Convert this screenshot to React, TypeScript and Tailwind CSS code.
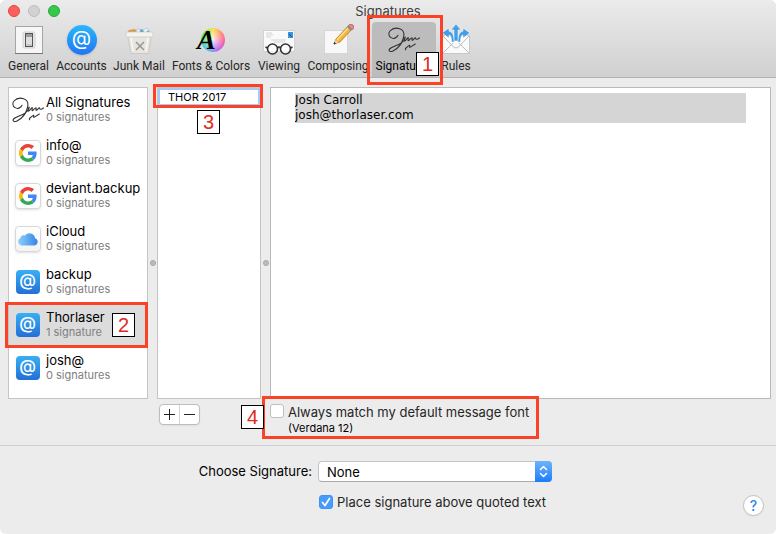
import { useState, type ReactNode } from "react";

const sans = "font-['Inter','Liberation_Sans',sans-serif]";

function SignatureGlyph({ className }: { className?: string }) {
  return (
    <svg viewBox="0 0 96 76" className={className} fill="none" stroke="#333" strokeWidth="3.200" strokeLinecap="round" strokeLinejoin="round" aria-hidden="true">
      <path d="M30 24C26 32 17 36 9 31C1 26 1 17 6 11C13 3 25 1 35 4C46 8 50 19 46 32C42 48 29 64 15 71C7 75 1 71 4 66C10 58 28 56 40 47C46 42 51 36 52 30C52 28 48 33 48 41C50 44 55 35 60 31C63 30 58 40 61 40C65 39 68 31 72 31C74 32 70 39 73 39C77 38 79 31 82 31C84 32 82 36 85 36C89 36 90 34 95 32" />
      <path d="M53 67C49 65 58 58 64 54C68 53 62 60 66 60L82 50" />
    </svg>
  );
}

function GeneralIcon() {
  return (
    <svg viewBox="0 0 32 32" className="size-8" aria-hidden="true">
      <rect x="2.500" y="2.500" width="27" height="27" fill="#f6f6f6" stroke="#a5a5a5" />
      <path d="M2 29.500h28" stroke="#777" />
      <rect x="10" y="8" width="12" height="16" rx="1.500" fill="#e7e7e7" stroke="#d2d2d2" />
      <rect x="12.500" y="9.500" width="7" height="13" fill="#c7c7c7" stroke="#555" />
      <path d="M13 10h6v3h-6z" fill="#9b9b9b" />
      <path d="M13 13h6v7h-6z" fill="#dedede" />
    </svg>
  );
}

function AccountsIcon() {
  return (
    <span className="flex size-[30px] items-center justify-center rounded-full bg-linear-to-b from-[#2cb8f8] to-[#2472f5] pb-1 text-[20px] leading-none text-white shadow-sm" aria-hidden="true">
      @
    </span>
  );
}

function JunkIcon() {
  return (
    <svg viewBox="0 0 32 32" className="size-8" aria-hidden="true">
      <path d="M4 9l2-3 6-1 3 4z" fill="#dc9848" />
      <path d="M13 9l1-4 6 1 4-2 4 5z" fill="#e9f2f8" stroke="#a3bccd" strokeWidth=".6" />
      <path d="M16 9l2-4 3 2-1 2zM23 9l2-3 2 3z" fill="#5a9cc9" />
      <path d="M4.500 11h24l-3 18.500H8z" fill="#e7e5e0" stroke="#c2c0bb" strokeWidth=".7" />
      <path d="M8 13l2 14M25 13l-2 14" stroke="#f8f8f6" strokeWidth="1.500" />
      <rect x="3" y="8" width="27" height="5" rx="1.500" fill="#f5f3ed" stroke="#c6c4bd" strokeWidth=".7" />
      <path d="M13 18l8 8M21 18l-8 8" stroke="#9a968e" strokeWidth="1.500" />
    </svg>
  );
}

function FontsIcon() {
  return (
    <span className="relative flex size-8 items-center justify-center" aria-hidden="true">
      <span className="ml-1 size-6 rounded-full bg-[radial-gradient(circle,#ffffffcc_0%,#ffffff00_65%),conic-gradient(#f9e34d,#ff8b79,#f35fa8,#b86cf0,#5dbcf5,#50e0a0,#7ee848,#f9e34d)]" />
      <span className="absolute left-0.5 top-0.5 font-['Liberation_Serif',serif] text-[28px] font-bold italic leading-7 text-black">A</span>
    </span>
  );
}

function ViewingIcon() {
  return (
    <svg viewBox="0 0 32 32" className="size-8" aria-hidden="true">
      <rect x=".5" y="6.500" width="31" height="21" fill="#fafafa" stroke="#d2d2d2" />
      <path d="M3 9h6M3 11h7M3 13h5M8 16h15M11 18h11" stroke="#c5cacf" strokeWidth=".8" />
      <rect x="25" y="8" width="5" height="6" fill="#3c95dc" />
      <path d="M26 10l3 3" stroke="#184d83" />
      <g fill="#ffffffaa" stroke="#333" strokeWidth="1.600">
        <circle cx="9.500" cy="25" r="5" />
        <circle cx="22.500" cy="25" r="5" />
        <path d="M14.500 24q1.500-2 3 0M4.500 24l-2-1M27.500 24l2-1" fill="none" />
      </g>
    </svg>
  );
}

function ComposingIcon() {
  return (
    <svg viewBox="0 0 32 32" className="size-8" aria-hidden="true">
      <path d="M2.500 6.500h23v23h-23z" fill="#f8f8f8" stroke="#d5d5d5" />
      <path d="M12 20l2-5L27 1l4 3-13 14z" fill="#f4b63a" stroke="#a56a1c" strokeWidth=".7" />
      <path d="M15 16L28 2" stroke="#ffe18a" strokeWidth="1.400" />
      <path d="M26 2l2-2q4 0 4 4l-2 2z" fill="#e78989" stroke="#a94a54" strokeWidth=".6" />
      <path d="M25 3l4 4 1-2-3-3z" fill="#888" />
      <path d="M12 20l1.500-4 3 2.500z" fill="#ecd0a0" />
      <path d="M12 20l.5-1.500 1 1z" stroke="#333" />
    </svg>
  );
}

function RulesIcon() {
  return (
    <svg viewBox="0 0 32 32" className="size-8" aria-hidden="true">
      <path d="M2.500 11.500h27v18h-27z" fill="#fafafa" stroke="#c8c8c8" />
      <path d="M3 29l10-10M29 29L19 19M3 12l10.500 11q2.500 2 5 0L29 12" fill="none" stroke="#bdbdbd" />
      <g fill="#459de5" stroke="#fafafa" strokeWidth=".6" strokeLinejoin="round">
        <path d="M2 9l7-5v3q5 1 5.500 11h-3q0-7-2.500-7v3z" />
        <path d="M30 9l-7-5v3q-5 1-5.500 11h3q0-7 2.500-7v3z" />
        <path d="M16 0l5 6h-3v11h-4V6h-3z" />
      </g>
    </svg>
  );
}

function GoogleIcon() {
  return (
    <span className="flex size-[26px] items-center justify-center rounded border border-[#d8d8d8] bg-white shadow-sm" aria-hidden="true">
      <svg viewBox="0 0 48 48" className="size-[18px]">
        <path fill="#ea4335" d="M24 9.500c3.540 0 6.710 1.220 9.210 3.600l6.850-6.850C35.900 2.380 30.470 0 24 0 14.620 0 6.510 5.380 2.560 13.220l7.980 6.190C12.430 13.720 17.740 9.500 24 9.500z" />
        <path fill="#4285f4" d="M46.980 24.550c0-1.570-.15-3.090-.38-4.550H24v9.020h12.940c-.58 2.960-2.260 5.480-4.780 7.180l7.730 6c4.510-4.180 7.090-10.360 7.090-17.650z" />
        <path fill="#fbbc05" d="M10.530 28.590A14.500 14.500 0 0 1 10.530 19.410l-7.980-6.190a24 24 0 0 0 0 21.560z" />
        <path fill="#34a853" d="M24 48c6.480 0 11.930-2.130 15.890-5.810l-7.730-6c-2.150 1.450-4.920 2.300-8.160 2.300-6.260 0-11.570-4.220-13.470-9.910l-7.980 6.190C6.510 42.620 14.620 48 24 48z" />
      </svg>
    </span>
  );
}

function CloudIcon() {
  return (
    <span className="flex size-[26px] items-center justify-center rounded border border-[#d8d8d8] bg-linear-to-b from-white to-[#f3f3f3] shadow-sm" aria-hidden="true">
      <svg viewBox="0 0 22 16" className="h-4 w-[22px]">
        <defs>
          <linearGradient id="cloud" x1="0" x2="1" y1="0" y2="0">
            <stop stopColor="#91cffa" />
            <stop offset="1" stopColor="#3385e2" />
          </linearGradient>
        </defs>
        <path fill="url(#cloud)" d="M5 14.500a4 4 0 0 1-1.500-7.600A3 3 0 0 1 8 4.600a5.500 5.500 0 0 1 10 2.700 3.700 3.700 0 0 1-.5 7.200z" />
      </svg>
    </span>
  );
}

function AtIcon() {
  return (
    <span className="flex size-6 items-center justify-center rounded-sm bg-linear-to-b from-[#39aff4] to-[#246fd6] pb-0.5 text-[17px] font-medium leading-none text-white" aria-hidden="true">
      @
    </span>
  );
}

function Frame({ className }: { className: string }) {
  return <span className={`pointer-events-none absolute z-10 border-3 border-[#fc4226] ${className}`} />;
}

function Step({ n, className }: { n: number; className: string }) {
  return (
    <span className={`absolute z-20 flex h-6 w-[23px] items-center justify-center border border-black bg-white font-['Liberation_Sans',sans-serif] text-xl leading-none text-[#e02b1d] ${className}`}>
      {n}
    </span>
  );
}

const tools: { name: string; icon: ReactNode; width: string }[] = [
  { name: "General", icon: <GeneralIcon />, width: "w-[49px]" },
  { name: "Accounts", icon: <AccountsIcon />, width: "w-[57px]" },
  { name: "Junk Mail", icon: <JunkIcon />, width: "w-[58px]" },
  { name: "Fonts & Colors", icon: <FontsIcon />, width: "w-[86px]" },
  { name: "Viewing", icon: <ViewingIcon />, width: "w-[50px]" },
  { name: "Composing", icon: <ComposingIcon />, width: "w-[68px]" },
  { name: "Signatures", icon: <SignatureGlyph className="h-[26px] w-8" />, width: "w-16" },
  { name: "Rules", icon: <RulesIcon />, width: "w-10" },
];

const accounts: { name: string; count: string; icon: ReactNode }[] = [
  { name: "All Signatures", count: "0 signatures", icon: <SignatureGlyph className="h-[26px] w-8" /> },
  { name: "info@", count: "0 signatures", icon: <GoogleIcon /> },
  { name: "deviant.backup", count: "0 signatures", icon: <GoogleIcon /> },
  { name: "iCloud", count: "0 signatures", icon: <CloudIcon /> },
  { name: "backup", count: "0 signatures", icon: <AtIcon /> },
  { name: "Thorlaser", count: "1 signature", icon: <AtIcon /> },
  { name: "josh@", count: "0 signatures", icon: <AtIcon /> },
];

function Splitter() {
  return (
    <div className="flex w-[9px] shrink-0 items-center justify-center pt-10">
      <span className="size-1.5 rounded-full border border-[#a5a5a5] bg-[#bcbcbc]" />
    </div>
  );
}

function Check({ id, checked, onChange }: { id: string; checked: boolean; onChange: (v: boolean) => void }) {
  return (
    <span className="relative flex size-3.5 shrink-0">
      <input
        id={id}
        type="checkbox"
        checked={checked}
        onChange={(e) => onChange(e.target.checked)}
        className="size-3.5 appearance-none rounded-[3px] border border-[#bfbfbf] bg-white checked:border-[#3d93f8] checked:bg-[#479bfa]"
      />
      {checked && (
        <svg viewBox="0 0 14 14" className="pointer-events-none absolute inset-0 size-3.5" fill="none" stroke="white" strokeWidth="1.700" strokeLinecap="round" strokeLinejoin="round" aria-hidden="true">
          <path d="M3.500 7.500l2.500 3 4.500-7" />
        </svg>
      )}
    </span>
  );
}

export default function App() {
  const [matchFont, setMatchFont] = useState(false);
  const [above, setAbove] = useState(true);

  return (
    <div className="bg-white">
      <div className={`flex min-h-screen flex-col overflow-hidden rounded-md bg-[#ececec] text-[13px] text-black ${sans}`}>
        <header className="relative flex h-[78px] flex-col border-b border-[#b1b1b1] bg-linear-to-b from-[#ebebeb] to-[#d0d0d0]">
          <div className="absolute left-2 top-[5px] flex gap-2">
            <button aria-label="Close" className="size-3 rounded-full border border-[#e2443f] bg-[#fc605c]" />
            <button aria-label="Minimize" className="size-3 rounded-full border border-[#bcbcbc] bg-[#d2d2d2]" />
            <button aria-label="Zoom" className="size-3 rounded-full border border-[#28a838] bg-[#35c84b]" />
          </div>
          <h1 className="h-[22px] text-center leading-[22px] text-[#404040]">Signatures</h1>
          <nav className="flex flex-1 pl-1 font-['Roboto','Liberation_Sans',sans-serif]">
            {tools.map((t) => {
              const active = t.name === "Signatures";
              return (
                <div key={t.name} className={`relative flex shrink-0 ${t.width}`}>
                  <button className={`flex w-full flex-col items-center whitespace-nowrap text-xs leading-4 ${active ? "rounded-t bg-[#bcbcbc] text-black" : "text-[#262626]"}`}>
                    <span className={`flex h-9 items-center ${sans}`}>{t.icon}</span>
                    {t.name}
                  </button>
                  {active && (
                    <>
                      <Frame className="-bottom-2 -left-[5px] -right-[7px] -top-[7px]" />
                      <Step n={1} className="-right-[3px] bottom-px" />
                    </>
                  )}
                </div>
              );
            })}
          </nav>
        </header>

        <main className="flex flex-1 flex-col pl-2 pr-[5px] pt-[9px]">
          <div className="flex flex-1">
            <ul className="w-[140px] shrink-0 border border-[#c4c4c4] bg-white">
              {accounts.map((a) => {
                const active = a.name === "Thorlaser";
                return (
                  <li key={a.name} className={`relative h-[43px] ${active ? "bg-[#dcdcdc]" : ""}`}>
                    <button className="flex h-full w-full items-center gap-0.5 pl-0.5 text-left">
                      <span className="flex w-[33px] shrink-0 justify-center">{a.icon}</span>
                      <span className="whitespace-nowrap">
                        <span className="block leading-[15px]">{a.name}</span>
                        <span className="block text-[11px] leading-[14px] text-[#808080]">{a.count}</span>
                      </span>
                    </button>
                    {active && (
                      <>
                        <Frame className="-bottom-0.5 -left-1 -right-px -top-px" />
                        <Step n={2} className="right-3 top-[10px]" />
                      </>
                    )}
                  </li>
                );
              })}
            </ul>
            <Splitter />
            <div className="relative w-[104px] shrink-0 border border-[#c4c4c4] bg-white">
              <input
                aria-label="Signature name"
                defaultValue="THOR 2017"
                className="block h-[18px] w-full border-2 border-[#a5cbf5] bg-white pl-2 text-[11px] outline-none"
              />
              <Frame className="-left-[5px] -right-[3px] -top-1 h-6" />
              <Step n={3} className="left-[39px] top-[22px]" />
            </div>
            <Splitter />
            <div className="min-w-0 flex-1 border border-[#b9b9b9] bg-white pl-6 pr-6 pt-[5px]">
              <textarea
                aria-label="Signature text"
                rows={2}
                defaultValue={"Josh Carroll\njosh@thorlaser.com"}
                className="block h-[30px] w-full resize-none overflow-hidden bg-[#d5d5d5] font-['DejaVu_Sans',sans-serif] text-xs leading-[15px] outline-none"
              />
            </div>
          </div>

          <div className="flex h-[46px] pt-[5px]">
            <div className="ml-[151px] flex h-[21px] w-[41px] rounded border border-[#bdbdbd] bg-white shadow-xs">
              <button aria-label="Add signature" className="flex flex-1 items-center justify-center border-r border-[#d5d5d5]">
                <svg viewBox="0 0 11 11" className="size-[11px]" stroke="#222" aria-hidden="true"><path d="M5.500 0v11M0 5.500h11" /></svg>
              </button>
              <button aria-label="Remove signature" className="flex flex-1 items-center justify-center">
                <svg viewBox="0 0 11 11" className="size-[11px]" stroke="#222" aria-hidden="true"><path d="M0 5.500h11" /></svg>
              </button>
            </div>
            <div className="relative ml-[70px] flex gap-1">
              <Check id="match-font" checked={matchFont} onChange={setMatchFont} />
              <label htmlFor="match-font" className="whitespace-nowrap text-[#262626]">
                <span className="block leading-4">Always match my default message font</span>
                <span className="block text-[11px] leading-4 text-black">(Verdana 12)</span>
              </label>
              <Frame className="-left-2 -top-2 h-[43px] w-[277px]" />
              <Step n={4} className="-left-[29px] top-px" />
            </div>
          </div>
        </main>

        <footer className="relative flex h-[89px] border-t border-[#d0d0d0] pt-[15px]">
          <label htmlFor="choose" className="w-[312px] shrink-0 text-right leading-[21px]">Choose Signature:</label>
          <div className="ml-1.5 flex flex-col gap-3">
            <span className="relative flex w-[234px]">
              <select id="choose" defaultValue="None" className="h-[21px] w-full appearance-none rounded border border-[#c4c4c4] border-b-[#a9a9a9] bg-white pl-2 leading-4">
                <option>None</option>
              </select>
              <span className="pointer-events-none absolute inset-y-0 right-0 flex w-[17px] items-center justify-center rounded-r bg-linear-to-b from-[#6cb3fa] to-[#1a7bfb]">
                <svg viewBox="0 0 9 13" className="h-[13px] w-[9px]" fill="none" stroke="white" strokeWidth="1.500" strokeLinecap="round" strokeLinejoin="round" aria-hidden="true">
                  <path d="M1.500 4.500l3-3 3 3M1.500 8.500l3 3 3-3" />
                </svg>
              </span>
            </span>
            <span className="flex items-center gap-1 pl-px">
              <Check id="place-above" checked={above} onChange={setAbove} />
              <label htmlFor="place-above" className="whitespace-nowrap leading-4 text-[#262626]">Place signature above quoted text</label>
            </span>
          </div>
          <button aria-label="Help" className="absolute bottom-[18px] right-3 flex size-[21px] items-center justify-center rounded-full border border-[#c0c0c0] bg-white text-sm font-medium text-[#2a86f5] shadow-xs">
            ?
          </button>
        </footer>
      </div>
    </div>
  );
}
